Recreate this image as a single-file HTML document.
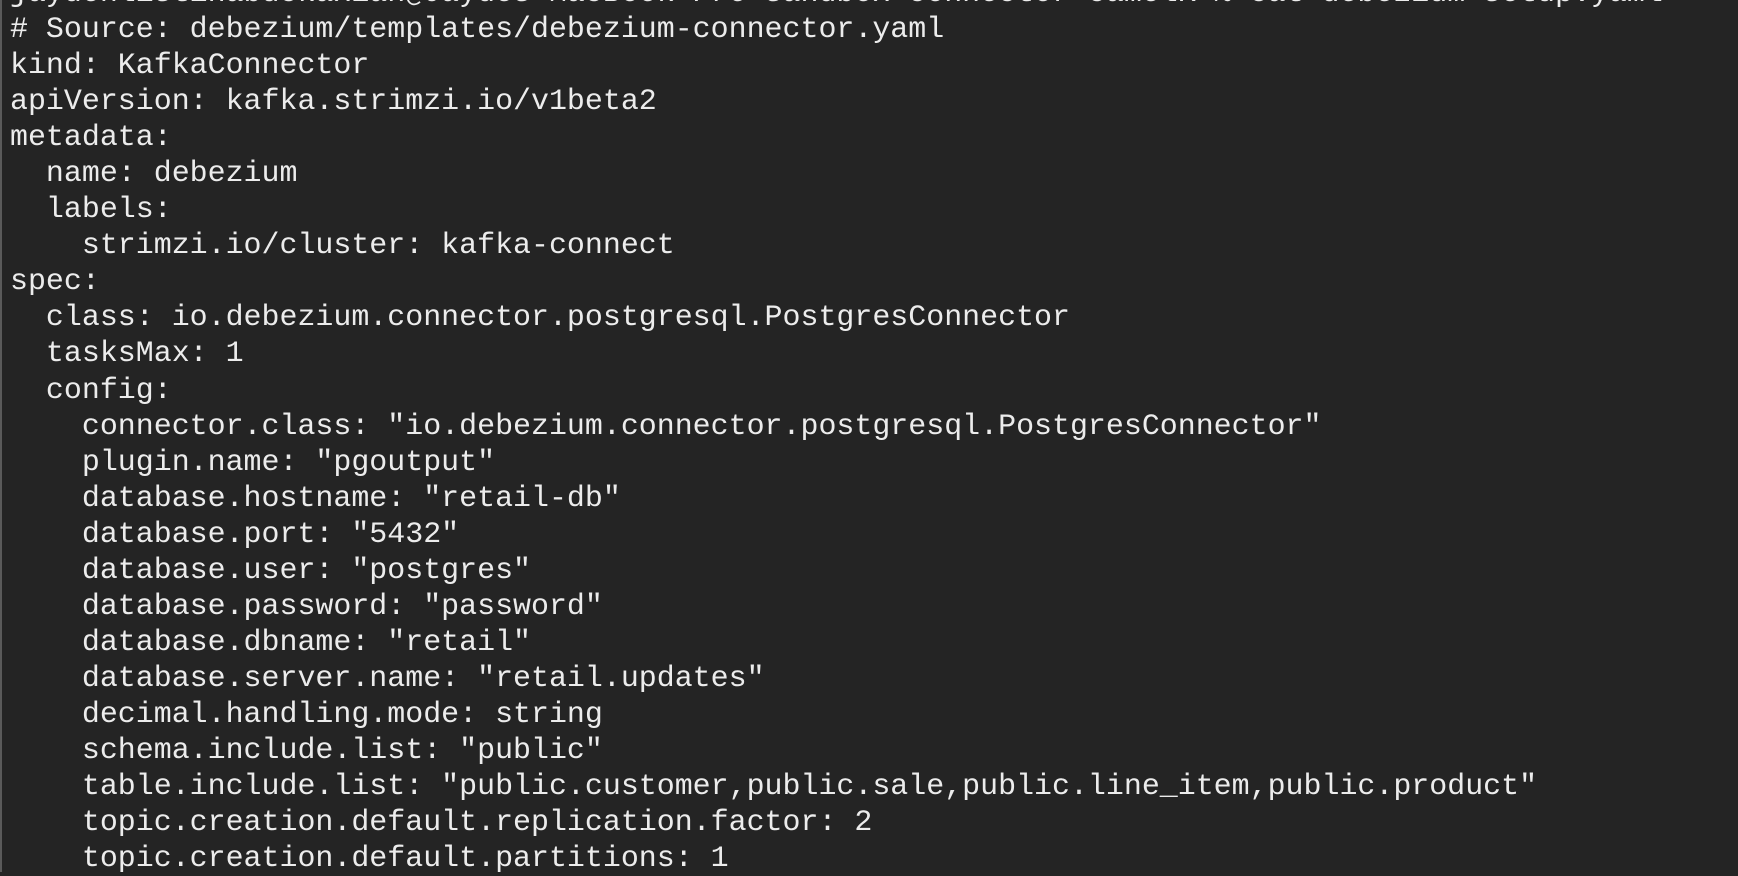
<!DOCTYPE html>
<html><head><style>
html,body{margin:0;padding:0;width:1738px;height:872px;overflow:hidden;background:#242424;}
body{border-left:2px solid #5a5a5a;box-sizing:border-box;}
pre{margin:0;position:absolute;left:10px;top:-25px;font-family:"Liberation Mono",monospace;font-size:29.95px;line-height:36.05px;color:#ececec;white-space:pre;}
</style></head><body><pre>jaydenlistinabuckaxian@Jaydes-MacBook-Pro sandbox-connector-camelK % cat debezium-setup.yaml
# Source: debezium/templates/debezium-connector.yaml
kind: KafkaConnector
apiVersion: kafka.strimzi.io/v1beta2
metadata:
  name: debezium
  labels:
    strimzi.io/cluster: kafka-connect
spec:
  class: io.debezium.connector.postgresql.PostgresConnector
  tasksMax: 1
  config:
    connector.class: "io.debezium.connector.postgresql.PostgresConnector"
    plugin.name: "pgoutput"
    database.hostname: "retail-db"
    database.port: "5432"
    database.user: "postgres"
    database.password: "password"
    database.dbname: "retail"
    database.server.name: "retail.updates"
    decimal.handling.mode: string
    schema.include.list: "public"
    table.include.list: "public.customer,public.sale,public.line_item,public.product"
    topic.creation.default.replication.factor: 2
    topic.creation.default.partitions: 1</pre></body></html>
